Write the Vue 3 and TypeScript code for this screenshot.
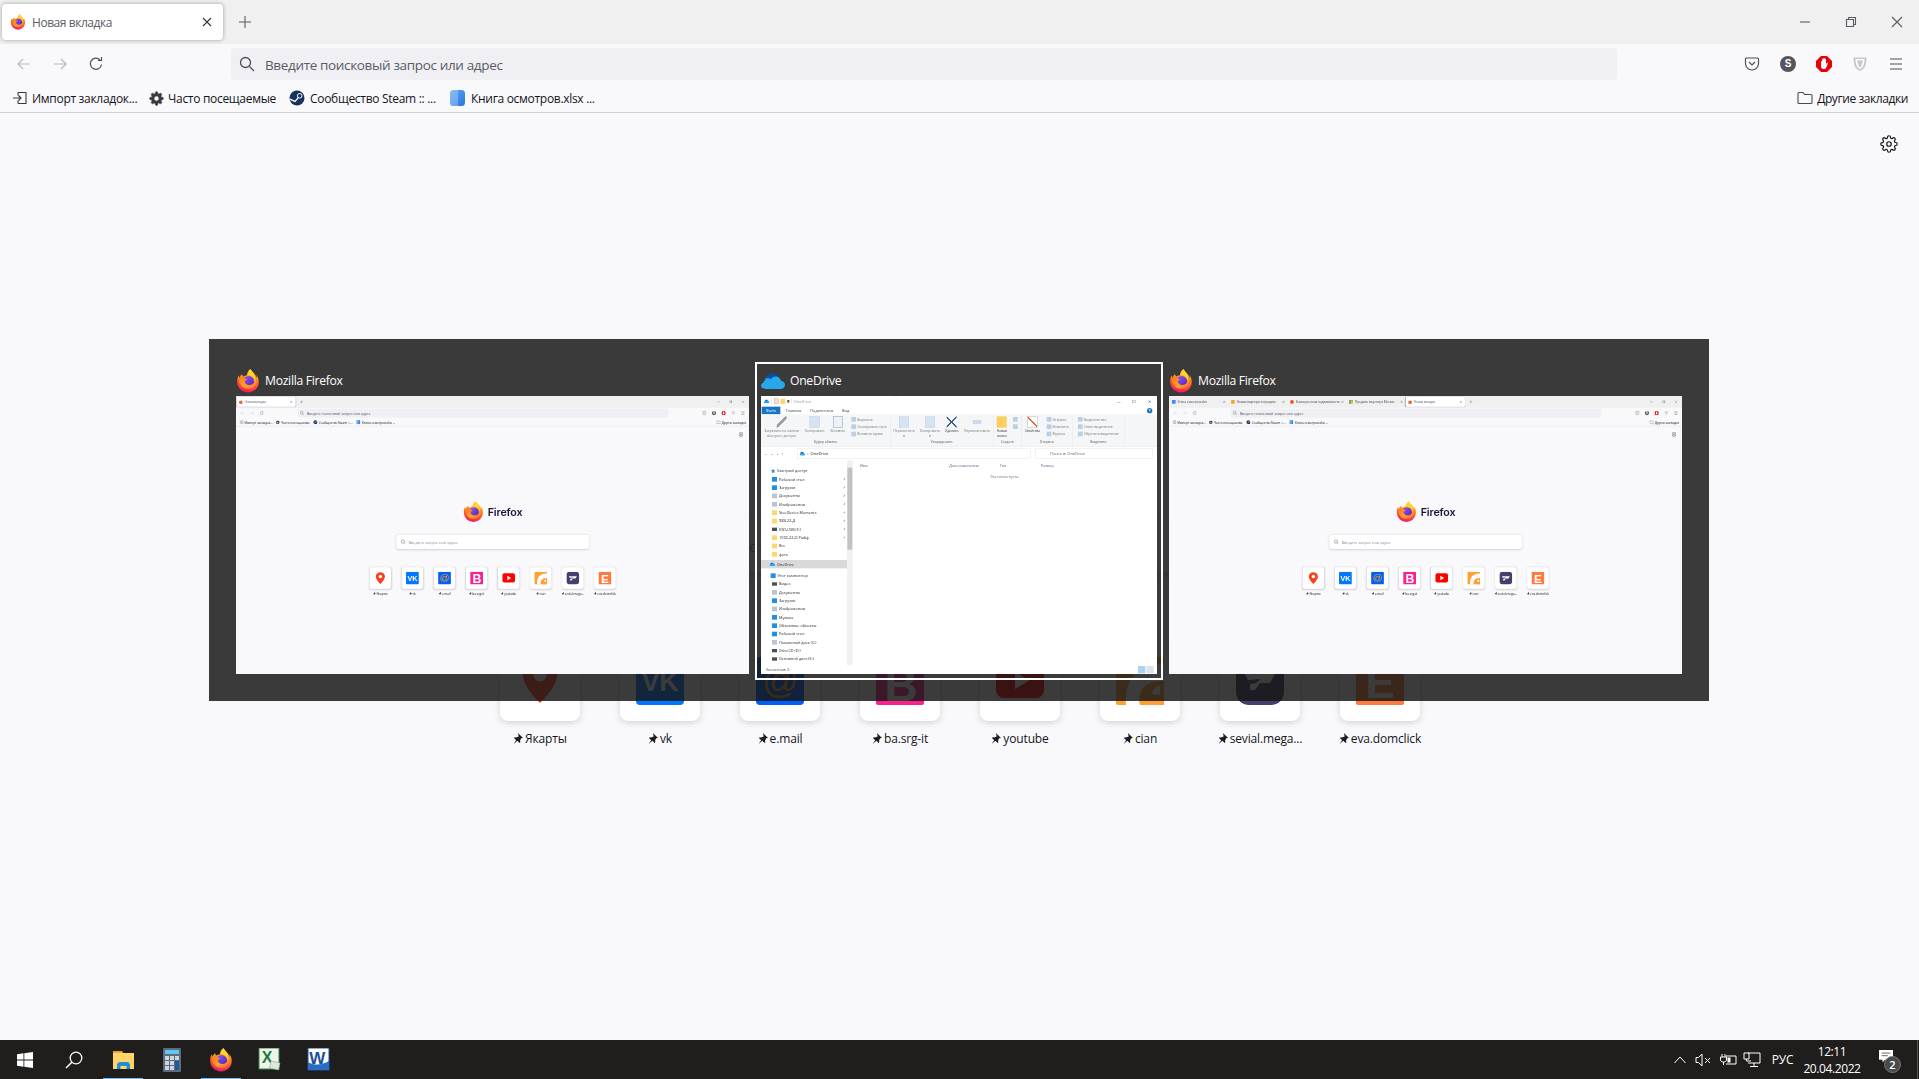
<script setup lang="ts">
interface TabItem {
  title: string
  icon: string
  active?: boolean
}

interface Tile {
  label: string
  icon: string
  glyph?: { text: string; x: number; y: number; size: number; fill: string; bold?: boolean }
}

const props = defineProps<{
  mini?: boolean
  tabs?: TabItem[]
}>()

const firstTabs: TabItem[] = [{ title: 'Новая вкладка', icon: 'ff', active: true }]
// третье окно: пять вкладок, текст на миниатюре всё равно не читается
const manyTabs: TabItem[] = [
  { title: 'Книга осмотров.xlsx', icon: 'doc' },
  { title: 'Новая квартира в продаже', icon: 'orange' },
  { title: 'Коммерческая недвижимость', icon: 'red' },
  { title: 'Продажа квартир в Москве', icon: 'ms' },
  { title: 'Новая вкладка', icon: 'ff', active: true },
]

const bookmarks = [
  { title: 'Импорт закладок...', icon: 'import' },
  { title: 'Часто посещаемые', icon: 'gear' },
  { title: 'Сообщество Steam :: ...', icon: 'steam' },
  { title: 'Книга осмотров.xlsx ...', icon: 'sheet' },
]

const tiles: Tile[] = [
  { label: 'Якарты', icon: 't-pin' },
  { label: 'vk', icon: 't-vk', glyph: { text: 'VK', x: 24, y: 34, size: 27, fill: '#fff', bold: true } },
  { label: 'e.mail', icon: 't-mail', glyph: { text: '@', x: 24, y: 36, size: 36, fill: '#f99d1c' } },
  { label: 'ba.srg-it', icon: 't-ba', glyph: { text: 'B', x: 25, y: 44, size: 46, fill: '#fff', bold: true } },
  { label: 'youtube', icon: 't-yt' },
  { label: 'cian', icon: 't-cian' },
  { label: 'sevial.mega...', icon: 't-sev' },
  { label: 'eva.domclick', icon: 't-eva', glyph: { text: 'E', x: 24, y: 41, size: 44, fill: '#fff', bold: true } },
]

const ribbon = [
  {
    label: 'Буфер обмена',
    bigs: [
      { k: 'pin', lines: ['Закрепить на панели', 'быстрого доступа'] },
      { k: 'doc', lines: ['Копировать'] },
      { k: 'paste', lines: ['Вставить'] },
    ],
    smalls: ['Вырезать', 'Скопировать путь', 'Вставить ярлык'],
  },
  {
    label: 'Упорядочить',
    bigs: [
      { k: 'doc', lines: ['Переместить', 'в'] },
      { k: 'doc', lines: ['Копировать', 'в'] },
      { k: 'del', lines: ['Удалить'] },
      { k: 'ren', lines: ['Переименовать'] },
    ],
    smalls: [],
  },
  { label: 'Создать', bigs: [{ k: 'folder', lines: ['Новая', 'папка'] }], smalls: [' ', '  '] },
  {
    label: 'Открыть',
    bigs: [{ k: 'check', lines: ['Свойства'] }],
    smalls: ['Открыть', 'Изменить', 'Журнал'],
  },
  { label: 'Выделить', bigs: [], smalls: ['Выделить все', 'Снять выделение', 'Обратить выделение'] },
]

const quickRows = [
  { t: 'Рабочий стол', c: 'blue' },
  { t: 'Загрузки', c: 'blue' },
  { t: 'Документы', c: 'grey' },
  { t: 'Изображения', c: 'grey' },
  { t: 'SteelSeries Moments', c: 'yellow' },
  { t: '988-22-Д', c: 'yellow' },
  { t: 'ESD-USB (F:)', c: 'dark' },
  { t: '1592-22-О Рыбф', c: 'yellow' },
  { t: 'Bre', c: 'yellow', nopin: true },
  { t: 'фото', c: 'yellow', nopin: true },
]

const pcRows = [
  { t: 'Видео', c: 'dark' },
  { t: 'Документы', c: 'grey' },
  { t: 'Загрузки', c: 'blue' },
  { t: 'Изображения', c: 'grey' },
  { t: 'Музыка', c: 'blue' },
  { t: 'Объемные объекты', c: 'blue' },
  { t: 'Рабочий стол', c: 'blue' },
  { t: 'Локальный диск (C:)', c: 'grey' },
  { t: 'DriveCD (D:)', c: 'dark' },
  { t: 'Основной диск (E:)', c: 'dark' },
]

const columns = ['Имя', 'Дата изменения', 'Тип', 'Размер']
</script>

<template>
  <div class="desktop" :class="{ mini: props.mini }">
    <!-- общие значки -->
    <svg v-if="!props.mini" class="defs" width="0" height="0">
      <defs>
        <linearGradient id="ff-body" x1=".62" y1="0" x2=".42" y2="1">
          <stop offset="0" stop-color="#ffe226" />
          <stop offset=".32" stop-color="#ff9a1f" />
          <stop offset=".68" stop-color="#ff4f3a" />
          <stop offset="1" stop-color="#f5156c" />
        </linearGradient>
        <linearGradient id="ff-globe" x1="0" y1="0" x2="1" y2="1">
          <stop offset="0" stop-color="#9059ff" />
          <stop offset="1" stop-color="#4f22b8" />
        </linearGradient>
        <linearGradient id="ff-fox" x1="0" y1="0" x2=".8" y2="1">
          <stop offset="0" stop-color="#ff7a1f" />
          <stop offset=".6" stop-color="#ffa51f" />
          <stop offset="1" stop-color="#ff6a2b" />
        </linearGradient>
        <linearGradient id="sheet-blue" x1="0" y1="0" x2="1" y2="1">
          <stop offset="0" stop-color="#5aa9f5" />
          <stop offset="1" stop-color="#2f74d8" />
        </linearGradient>
      </defs>
      <symbol id="ff" viewBox="1.5 .5 21 23">
        <path fill="url(#ff-body)" d="M3 6.500C2.200 8 1.700 10 1.700 12.700a10.300 10.300 0 1 0 20.600 0c0-2.200-.8-4.700-2.300-6.400.5 1.700.4 2.500.3 2.900C19.500 6 17 4 15 1.500c-.2-.3-.4-.6-.5-.9-2.500 1.400-3.500 4.400-3.500 5.900-1.500.1-2.500.5-3.400 1.200-.6-.4-1-.9-1.200-2.100C5 6.400 4 8 3.800 9c-.3-.7-.6-1.600-.8-2.500Z" />
        <circle cx="12.600" cy="12.600" r="5.300" fill="url(#ff-globe)" />
        <path fill="url(#ff-fox)" d="M3.700 9.500c.5-.6 1.600-1 2.700-.9 1.300.1 1.900.9 3.200 1.200 1.100.2 1.600.6 1.500 1-.1.3-1.200.6-2 .8-.5 1.800.8 3.700 3 4.200 2.800.6 5.300-.8 6.200-3 .5-1.200.4-2.500.2-3.500 1 1.200 1.400 2.800 1.300 4.300-.3 3.400-3.400 6.200-7.300 6.200-4.500 0-8.200-3.500-8.700-7.400-.2-1.100-.2-2 0-2.900Z" />
        <path fill="#ffd52b" d="M14.500 1c-1.800 1.500-2.700 3.500-2.800 5.300 1.900-.1 4.700.9 6 3.300 1 1.700.8 3.400.8 3.400 1.200-2.800.4-6.200-2-9C15.600 3 14.900 2 14.500 1Z" />
      </symbol>
      <symbol id="od-logo" viewBox="0 0 24 16">
        <path fill="#0a4f9e" d="M9 11 5 4.500C6.200 1.800 8.700.2 11.500.2c2.300 0 4.400 1.100 5.700 3l-4 4Z" />
        <path fill="#1490df" d="M6 14 4 5.200c2-.9 4-.6 5.700.6l5 3.700Z" />
        <path fill="#28a8ea" d="M5 16h14.500c2.500 0 4.500-1.800 4.500-4 0-2.100-1.700-3.900-4-4-.4-2.600-2.700-4.500-5.300-4.500-2.100 0-4 1.200-4.800 3-.7-.4-1.500-.6-2.400-.6C4.800 5.900 2.800 7.500 2.400 9.700.9 10.200 0 11.500 0 12.800 0 14.600 2 16 5 16Z" />
      </symbol>
      <symbol id="t-pin" viewBox="0 0 48 48">
        <path fill="#fc3f1d" d="M24 2C14 2 7 9 7 18c0 12 17 28 17 28s17-16 17-28C41 9 34 2 24 2Z" />
        <circle cx="24" cy="18" r="6.500" fill="#fff" />
      </symbol>
      <symbol id="t-vk" viewBox="0 0 48 48"><rect width="48" height="48" rx="4" fill="#07f" /></symbol>
      <symbol id="t-mail" viewBox="0 0 48 48"><rect width="48" height="48" rx="4" fill="#005ff9" /></symbol>
      <symbol id="t-ba" viewBox="0 0 48 48"><rect width="48" height="48" rx="2" fill="#f9218d" /></symbol>
      <symbol id="t-yt" viewBox="0 0 48 48">
        <rect y="6" width="48" height="35" rx="8" fill="#f00" />
        <path fill="#fff" d="M19 15v17l14-8.500Z" />
      </symbol>
      <symbol id="t-cian" viewBox="0 0 48 48">
        <rect width="48" height="48" rx="2" fill="#ffa033" />
        <path fill="#fff" d="M48 7C24 5 8 20 10 48h14c-3-13 4-25 24-24Z" />
        <path fill="#ffa033" d="M40 28c-6 0-10 5-10 12 0 3 1 6 2 8h16V28Z" />
        <path fill="#fff" d="M44 29v9l-8-1c1-5 4-8 8-8Z" />
      </symbol>
      <symbol id="t-sev" viewBox="0 0 48 48">
        <rect width="48" height="48" rx="13" fill="#463f6c" />
        <path fill="#fff" d="M9 17h30l-5 9H21l-4 2 8-6-13 1Z" />
        <path fill="#fff" d="m14 27 10-1-5 7h-5Z" />
      </symbol>
      <symbol id="t-eva" viewBox="0 0 48 48"><rect width="48" height="48" rx="2" fill="#ff7a3d" /></symbol>
      <symbol id="cog" viewBox="0 0 24 24">
        <circle cx="12" cy="12" r="3" />
        <path d="M19.400 15a1.650 1.650 0 0 0 .33 1.820l.06.06a2 2 0 1 1-2.830 2.830l-.06-.06a1.650 1.650 0 0 0-1.820-.33 1.650 1.650 0 0 0-1 1.510V21a2 2 0 1 1-4 0v-.09A1.650 1.650 0 0 0 9 19.400a1.650 1.650 0 0 0-1.820.33l-.06.06a2 2 0 1 1-2.830-2.830l.06-.06a1.650 1.650 0 0 0 .33-1.820 1.650 1.650 0 0 0-1.510-1H3a2 2 0 1 1 0-4h.09A1.650 1.650 0 0 0 4.600 9a1.650 1.650 0 0 0-.33-1.820l-.06-.06a2 2 0 1 1 2.830-2.830l.06.06a1.650 1.650 0 0 0 1.820.33H9a1.650 1.650 0 0 0 1-1.510V3a2 2 0 1 1 4 0v.09a1.650 1.650 0 0 0 1 1.510 1.650 1.650 0 0 0 1.820-.33l.06-.06a2 2 0 1 1 2.830 2.830l-.06.06a1.650 1.650 0 0 0-.33 1.820V9a1.650 1.650 0 0 0 1.510 1H21a2 2 0 1 1 0 4h-.09a1.650 1.650 0 0 0-1.510 1Z" />
      </symbol>
    </svg>

    <div class="browser">
      <div class="tabstrip">
        <div
          v-for="tab in (props.tabs ?? firstTabs)"
          :key="tab.title"
          class="tab"
          :class="{ active: tab.active }"
        >
          <svg v-if="tab.icon === 'ff'" class="fav" viewBox="0 0 16 16"><use href="#ff" width="16" height="16" /></svg>
          <svg v-else class="fav" viewBox="0 0 16 16">
            <rect v-if="tab.icon === 'doc'" x="1" y="1" width="14" height="14" rx="2" fill="#3d8bf0" />
            <rect v-if="tab.icon === 'orange'" x="1" y="1" width="14" height="14" rx="3" fill="#f3a33a" />
            <circle v-if="tab.icon === 'red'" cx="8" cy="8" r="7" fill="#e8501f" />
            <g v-if="tab.icon === 'ms'">
              <rect x="1" y="1" width="6.500" height="6.500" fill="#f25022" />
              <rect x="8.500" y="1" width="6.500" height="6.500" fill="#7fba00" />
              <rect x="1" y="8.500" width="6.500" height="6.500" fill="#00a4ef" />
              <rect x="8.500" y="8.500" width="6.500" height="6.500" fill="#ffb900" />
            </g>
          </svg>
          <span class="tab-title">{{ tab.title }}</span>
          <svg class="tab-x" viewBox="0 0 10 10"><path d="M1 1l8 8M9 1L1 9" /></svg>
        </div>
        <svg class="plus" viewBox="0 0 12 12"><path d="M6 0v12M0 6h12" /></svg>
        <div class="winbtns">
          <svg viewBox="0 0 12 12"><path d="M1 6h10" /></svg>
          <svg viewBox="0 0 12 12"><path d="M1.500 3.500h7v7h-7zM3.500 3.500v-2h7v7h-2" /></svg>
          <svg viewBox="0 0 12 12"><path d="M1 1l10 10M11 1L1 11" /></svg>
        </div>
      </div>

      <div class="navbar">
        <button class="navbtn faded">
          <svg viewBox="0 0 16 16"><path d="M14 8H2.500M7 3 2 8l5 5" /></svg>
        </button>
        <button class="navbtn faded">
          <svg viewBox="0 0 16 16"><path d="M2 8h11.500M9 3l5 5-5 5" /></svg>
        </button>
        <button class="navbtn">
          <svg viewBox="0 0 16 16"><path d="M13.500 8.500A5.600 5.600 0 1 1 12 3.800M13.500 1v3.500H10" /></svg>
        </button>
        <div class="urlbar">
          <svg class="lens" viewBox="0 0 16 16"><circle cx="6.500" cy="6.500" r="5" /><path d="m10.500 10.500 4.500 4.500" /></svg>
          <span>Введите поисковый запрос или адрес</span>
        </div>
        <div class="tools">
          <button class="navbtn">
            <svg viewBox="0 0 16 16"><path d="M2.500 2h11c.6 0 1 .4 1 1v4.500a6.500 6.500 0 0 1-13 0V3c0-.6.400-1 1-1Z" /><path d="m5 6 3 3 3-3" /></svg>
          </button>
          <button class="navbtn">
            <span class="s-badge">S</span>
          </button>
          <button class="navbtn">
            <svg viewBox="0 0 16 16" class="solid">
              <path fill="#e8000b" d="M5 0h6l5 5v6l-5 5H5l-5-5V5Z" />
              <path fill="#fff" d="M5 5.500c0-.8 1.200-.8 1.200 0V3.200c0-.8 1.300-.8 1.300 0v-.7c0-.8 1.300-.8 1.300 0v.8c0-.7 1.200-.7 1.200 0V8l.8-1c.6-.6 1.500 0 1 .7L10 12c-.5.700-1 1-2 1H7.500C6 13 5 12 5 10.500Z" />
            </svg>
          </button>
          <button class="navbtn">
            <svg viewBox="0 0 16 16" class="solid">
              <path fill="#c8c8cc" d="M1.500 1.500h13c0 7-1 11-6.500 13.500C2.500 12.500 1.500 8.500 1.500 1.500Z" />
              <path fill="#f9f9fb" d="M3.500 3h9c0 5-1 8-4.500 10.200C4.500 11 3.500 8 3.500 3Z" />
              <path fill="#c8c8cc" d="M5 4.500h6L8.800 11H7.200Z" />
            </svg>
          </button>
          <button class="navbtn">
            <svg viewBox="0 0 16 16"><path d="M2 3h12M2 8h12M2 13h12" /></svg>
          </button>
        </div>
      </div>

      <div class="bookbar">
        <div v-for="b in bookmarks" :key="b.icon" class="book">
          <svg v-if="b.icon === 'import'" class="bico" viewBox="0 0 16 16">
            <path d="M6 2.500h8v11H6M6 2.500v3M6 10.500v3M1 8h8M6.500 5.500 9 8l-2.500 2.500" fill="none" stroke="#3a3a42" stroke-width="1.100" />
          </svg>
          <svg v-if="b.icon === 'gear'" class="bico gearfill" viewBox="0 0 24 24">
            <use href="#cog" width="24" height="24" />
            <circle cx="12" cy="12" r="3.500" fill="#f9f9fb" stroke="none" />
          </svg>
          <svg v-if="b.icon === 'steam'" class="bico" viewBox="0 0 16 16">
            <circle cx="8" cy="8" r="7.500" fill="#12345e" />
            <circle cx="10.700" cy="5.800" r="2.300" fill="none" stroke="#fff" stroke-width="1" />
            <path d="M.8 9.200 6 11.400l3.500-4" fill="none" stroke="#fff" stroke-width="1.300" />
          </svg>
          <svg v-if="b.icon === 'sheet'" class="bico" viewBox="0 0 16 16">
            <rect x="1" y="0" width="15" height="16" rx="3.500" fill="url(#sheet-blue)" />
            <path fill="#fff" opacity=".25" d="M1 3.500C1 1.500 2.500 0 4.500 0H9v16H4.500C2.500 16 1 14.500 1 12.500Z" />
          </svg>
          <span>{{ b.title }}</span>
        </div>
        <div class="book other">
          <svg class="bico" viewBox="0 0 16 16"><path d="M1 3.500c0-.6.400-1 1-1h4l1.500 2H14c.6 0 1 .4 1 1v7c0 .6-.4 1-1 1H2c-.6 0-1-.4-1-1Z" fill="none" stroke="#4a4a55" stroke-width="1.100" /></svg>
          <span>Другие закладки</span>
        </div>
      </div>

      <div class="newtab">
        <svg class="settings" viewBox="0 0 24 24"><use href="#cog" width="24" height="24" /></svg>
        <div class="brand">
          <svg class="brand-logo" viewBox="0 0 80 80"><use href="#ff" width="80" height="80" /></svg>
          <span>Firefox</span>
        </div>
        <div class="searchbox">
          <svg class="lens big" viewBox="0 0 16 16"><circle cx="6.500" cy="6.500" r="5" /><path d="m10.500 10.500 4.500 4.500" /></svg>
          <span>Введите запрос или адрес</span>
        </div>
        <div class="tiles">
          <div v-for="t in tiles" :key="t.label" class="site">
            <div class="tile">
              <svg viewBox="0 0 48 48">
                <use :href="'#' + t.icon" width="48" height="48" />
                <text
                  v-if="t.glyph"
                  :x="t.glyph.x"
                  :y="t.glyph.y"
                  :font-size="t.glyph.size"
                  :fill="t.glyph.fill"
                  :font-weight="t.glyph.bold ? 700 : 400"
                  text-anchor="middle"
                  font-family="Liberation Sans"
                >{{ t.glyph.text }}</text>
              </svg>
            </div>
            <div class="site-label">
              <svg viewBox="0 0 10 10"><path fill="#1c1b22" d="M5.400 0 10 4.500l-1.700.3-1 2.300.3 1.400-.7.600-2-2L1.500 10 3.800 6.500l-2-2 .7-.6 1.200.3 2.400-1Z" /></svg>
              <span>{{ t.label }}</span>
            </div>
          </div>
        </div>
      </div>
    </div>

    <template v-if="!props.mini">
      <div class="taskbar">
        <div class="task">
          <svg viewBox="0 0 16 16" class="ti16"><path fill="#fff" d="M0 2.300 6.500 1.300v6.300H0ZM7.300 1.200 16 0v7.600H7.300ZM0 8.400h6.500v6.300L0 13.700ZM7.300 8.400H16V16l-8.700-1.200Z" /></svg>
        </div>
        <div class="task">
          <svg viewBox="0 0 18 18" class="ti18"><circle cx="11" cy="7" r="5.800" fill="none" stroke="#fff" stroke-width="1.300" /><path d="M6.800 11.200 1 17" stroke="#fff" stroke-width="1.500" /></svg>
        </div>
        <div class="task on">
          <svg viewBox="0 0 24 24" class="ti24">
            <path fill="#e8a92e" d="M2 3h9l2 3H2Z" />
            <rect x="2" y="5" width="21" height="16" fill="#ffd568" />
            <path fill="#1f8fdc" d="M6 21v-5l2-2h9l2 2v5h-3.500v-3h-6v3Z" />
          </svg>
        </div>
        <div class="task">
          <svg viewBox="0 0 24 24" class="ti24">
            <rect x="3" y="0" width="18" height="24" rx="1" fill="#5e6b7c" />
            <rect x="5" y="2" width="14" height="4" fill="#5ec8f2" />
            <g fill="#cdd5dd">
              <rect x="5" y="8" width="4" height="4" /><rect x="10" y="8" width="4" height="4" /><rect x="15" y="8" width="4" height="4" />
              <rect x="5" y="13" width="4" height="4" /><rect x="10" y="13" width="4" height="4" />
              <rect x="5" y="18" width="4" height="4" /><rect x="10" y="18" width="4" height="4" />
            </g>
            <rect x="15" y="13" width="4" height="9" fill="#1a5a9e" />
          </svg>
        </div>
        <div class="task on2">
          <svg viewBox="0 0 24 24" class="ti24"><use href="#ff" width="24" height="24" /></svg>
        </div>
        <div class="task">
          <svg viewBox="0 0 24 24" class="ti24">
            <rect x="1" y="0" width="20" height="21" fill="#eef4ec" stroke="#2f8a4a" />
            <text x="9" y="15" text-anchor="middle" font-family="Liberation Sans" font-weight="700" font-size="16" fill="#1d7a3e">X</text>
            <path fill="#dfe8dc" stroke="#8aa88c" stroke-width=".6" d="M13 13l9 2-1.500 7-9-2Z" />
          </svg>
        </div>
        <div class="task">
          <svg viewBox="0 0 24 24" class="ti24">
            <rect x="1" y="0" width="21" height="22" fill="#fff" stroke="#1d4f9c" />
            <path fill="#2b6cc4" d="M1 14c7 4 14 3 21-1v9H1Z" />
            <text x="10" y="16" text-anchor="middle" font-family="Liberation Sans" font-weight="700" font-size="17" fill="#1d4f9c">W</text>
          </svg>
        </div>

        <div class="tray">
          <svg class="tray-caret" viewBox="0 0 12 8"><path d="M.5 7 6 1l5.500 6" /></svg>
          <svg class="tray-ico" viewBox="0 0 16 16"><path d="M1 5.500h2.500L7 2v12L3.500 10.500H1ZM10 6l5 5M15 6l-5 5" /></svg>
          <svg class="tray-ico wide" viewBox="0 0 18 16"><path d="M7 4h10v8H7M3 2v3M6 2v3M1.500 5h6v3c0 1-1 2-3 2s-3-1-3-2ZM4.500 10v3" /><rect x="8.500" y="5.500" width="3" height="5" fill="#fff" stroke="none" /></svg>
          <svg class="tray-ico wide" viewBox="0 0 18 16"><path d="M5 1h12v10H5M1 1h5v6H1ZM3.500 7v2H8M11 11v3M7 14.500h8" /></svg>
          <span class="lang">РУС</span>
          <div class="clock">
            <span>12:11</span>
            <span>20.04.2022</span>
          </div>
          <div class="notif">
            <svg viewBox="0 0 16 16"><path fill="#fff" d="M0 0h16v11H7l-3 3v-3H0Z" /><path stroke="#555" d="M3 3.500h10M3 6.500h7" /></svg>
            <span class="notif-num">2</span>
          </div>
        </div>
      </div>

      <div class="switcher">
        <div class="win">
          <div class="win-title">
            <svg viewBox="0 0 24 24"><use href="#ff" width="24" height="24" /></svg>
            <span>Mozilla Firefox</span>
          </div>
          <div class="thumb">
            <div class="thumb-scale"><App mini :tabs="firstTabs" /></div>
          </div>
        </div>

        <div class="win selected">
          <div class="win-title">
            <svg viewBox="0 0 24 16"><use href="#od-logo" width="24" height="16" /></svg>
            <span>OneDrive</span>
          </div>
          <div class="thumb thumb-ex">
            <div class="explorer">
              <div class="ex-title">
                <svg viewBox="0 0 24 16"><use href="#od-logo" width="24" height="16" /></svg>
                <i class="ex-sep"></i><i class="qa red"></i><i class="qa yel"></i><i class="qa dot"></i><i class="ex-sep"></i>
                <span>OneDrive</span>
                <div class="ex-winbtns">
                  <span>—</span><span>☐</span><span>✕</span>
                </div>
              </div>
              <div class="ex-tabs">
                <span class="ex-file">Файл</span>
                <span>Главная</span>
                <span>Поделиться</span>
                <span>Вид</span>
                <b class="ex-help">?</b>
              </div>
              <div class="ex-ribbon">
                <div v-for="g in ribbon" :key="g.label" class="rb-group">
                  <div class="rb-items">
                    <div v-for="b in g.bigs" :key="b.lines[0] + g.label" class="rb-big">
                      <i class="rb-ico" :class="b.k"></i>
                      <span v-for="l in b.lines" :key="l">{{ l }}</span>
                    </div>
                    <div v-if="g.smalls.length" class="rb-smalls">
                      <div v-for="s in g.smalls" :key="s" class="rb-small"><i></i>{{ s }}</div>
                    </div>
                  </div>
                  <div class="rb-label">{{ g.label }}</div>
                </div>
              </div>
              <div class="ex-addr">
                <span class="ex-arrows">←&nbsp;&nbsp;→&nbsp;&nbsp;⌄&nbsp;&nbsp;↑</span>
                <div class="ex-path">
                  <svg viewBox="0 0 24 16"><use href="#od-logo" width="24" height="16" /></svg>
                  <span>›&nbsp;&nbsp;OneDrive</span>
                </div>
                <div class="ex-find">Поиск в: OneDrive</div>
              </div>
              <div class="ex-body">
                <div class="ex-side">
                  <div class="row head"><i class="ic star"></i>Быстрый доступ</div>
                  <div v-for="r in quickRows" :key="r.t" class="row">
                    <i class="ic" :class="r.c"></i>{{ r.t }}
                    <em v-if="!r.nopin" class="pinmark"></em>
                  </div>
                  <div class="row head sel"><svg viewBox="0 0 24 16"><use href="#od-logo" width="24" height="16" /></svg>OneDrive</div>
                  <div class="row head pc"><i class="ic blue"></i>Этот компьютер</div>
                  <div v-for="r in pcRows" :key="r.t" class="row">
                    <i class="ic" :class="r.c"></i>{{ r.t }}
                  </div>
                </div>
                <div class="ex-scroll"><i></i></div>
                <div class="ex-main">
                  <div class="ex-cols">
                    <span v-for="c in columns" :key="c">{{ c }}</span>
                  </div>
                  <div class="ex-empty">Эта папка пуста.</div>
                </div>
              </div>
              <div class="ex-status">
                <span>Элементов: 0</span>
                <i class="vw on"></i><i class="vw"></i>
              </div>
            </div>
          </div>
        </div>

        <div class="win">
          <div class="win-title">
            <svg viewBox="0 0 24 24"><use href="#ff" width="24" height="24" /></svg>
            <span>Mozilla Firefox</span>
          </div>
          <div class="thumb">
            <div class="thumb-scale"><App mini :tabs="manyTabs" /></div>
          </div>
        </div>
      </div>
    </template>
  </div>
</template>

<style scoped>
.desktop {
  position: relative;
  width: 1919px;
  height: 1079px;
  overflow: hidden;
  display: flex;
  flex-direction: column;
  background: #f9f9fb;
  color: #15141a;
  font-family: "Open Sans", "Noto Sans", sans-serif;
  font-size: 12px;
  letter-spacing: -0.3px;
}
.desktop.mini { height: 1040px; }
.defs { position: absolute; }

.browser { height: 1040px; flex: none; display: flex; flex-direction: column; }
.navbtn svg, .winbtns svg, .plus, .tab-x, .lens, .settings, .tray svg {
  fill: none;
  stroke: #5b5b66;
  stroke-width: 1.1;
}

.tabstrip {
  height: 44px;
  flex: none;
  background: #f0f0f0;
  display: flex;
  align-items: flex-start;
  padding-left: 2px;
}
.tab {
  width: 221px;
  height: 36px;
  margin-top: 4px;
  display: flex;
  align-items: center;
  padding: 0 11px 0 8px;
  box-sizing: border-box;
  border-radius: 4px;
  color: #4a4a55;
  flex: none;
  letter-spacing: -0.45px;
}
.tab.active { background: #fff; box-shadow: 0 0 4px rgba(0,0,0,.35); color: #5b5b66; }
.tab-title { flex: 1; margin-left: 6px; white-space: nowrap; overflow: hidden; }
.fav { width: 16px; height: 16px; flex: none; }
.tab-x { width: 10px; height: 10px; stroke: #333; }
.plus { width: 12px; height: 12px; margin: 16px 0 0 16px; flex: none; }
.winbtns { margin-left: auto; margin-right: -1px; display: flex; height: 44px; }
.winbtns svg { width: 12px; height: 12px; padding: 16px 17px; }

.navbar { height: 40px; flex: none; display: flex; align-items: center; padding: 0 5px 0 6px; }
.navbtn {
  width: 36px;
  height: 36px;
  border: 0;
  padding: 0;
  background: none;
  display: flex;
  align-items: center;
  justify-content: center;
  flex: none;
}
.navbtn svg { width: 16px; height: 16px; stroke: #4f4f59; stroke-width: 1.200; }
.navbtn svg.solid { stroke: none; }
.navbtn.faded svg { stroke: #b9b9bf; }
.urlbar {
  width: 1386px;
  height: 32px;
  margin-left: 117px;
  background: #f0f0f4;
  border-radius: 4px;
  display: flex;
  align-items: center;
  padding-left: 8px;
  box-sizing: border-box;
  font-size: 13.500px;
  letter-spacing: -0.35px;
  color: #5b5b66;
}
.urlbar span { padding-top: 2px; }
.lens { width: 16px; height: 16px; margin-right: 10px; stroke: #4f4f59; stroke-width: 1.300; flex: none; }
.tools { margin-left: auto; display: flex; }
.s-badge {
  width: 16px;
  height: 16px;
  border-radius: 50%;
  background: #55555f;
  color: #fff;
  font-size: 10px;
  font-weight: 700;
  text-align: center;
  line-height: 16px;
  letter-spacing: 0;
}

.bookbar {
  height: 28px;
  flex: none;
  display: grid;
  grid-template-columns: 136px 141px 160px auto 1fr;
  align-items: center;
  padding-left: 12px;
  border-bottom: 1px solid #cfcfd3;
  color: #15141a;
}
.book { display: flex; align-items: center; gap: 4px; white-space: nowrap; }
.book:nth-child(3) { gap: 5px; }
.book:nth-child(4) { gap: 6px; }
.bico { width: 16px; height: 16px; flex: none; }
.gearfill { fill: #3a3a42; stroke: #3a3a42; stroke-width: 1; width: 15px; height: 15px; margin-left: 1px; }
.other { justify-self: end; padding-right: 11px; letter-spacing: -0.42px; }

.newtab { flex: 1; position: relative; display: flex; flex-direction: column; align-items: center; }
.settings { position: absolute; top: 22px; right: 21px; width: 18px; height: 18px; stroke: #15141a; stroke-width: 1.600; }
.brand { display: flex; align-items: center; gap: 14px; margin-top: 280px; height: 80px; }
.brand-logo { width: 80px; height: 80px; }
.brand span { font-family: Inter, sans-serif; font-weight: 600; font-size: 40px; letter-spacing: -0.5px; color: #20123a; }
.searchbox {
  width: 720px;
  height: 52px;
  margin-top: 47px;
  background: #fff;
  border-radius: 8px;
  box-shadow: 0 3px 8px rgba(58,57,68,.2);
  display: flex;
  align-items: center;
  padding-left: 16px;
  box-sizing: border-box;
  font-size: 15px;
  color: #8f8f9d;
}
.lens.big { width: 20px; height: 20px; }
.tiles { display: flex; margin-top: 69px; }
.site { width: 120px; display: flex; flex-direction: column; align-items: center; }
.tile {
  width: 80px;
  height: 80px;
  background: #fff;
  border-radius: 8px;
  box-shadow: 0 2px 6px rgba(58,57,68,.2);
  display: flex;
  align-items: center;
  justify-content: center;
}
.tile svg { width: 48px; height: 48px; }
.site-label { display: flex; align-items: center; gap: 2px; margin-top: 9px; height: 17px; white-space: nowrap; letter-spacing: -0.15px; }
.site-label svg { width: 11px; height: 11px; flex: none; }

.taskbar {
  height: 39px;
  flex: none;
  background: #1f1e1c;
  display: flex;
  align-items: stretch;
  color: #fff;
}
.task {
  width: 49px;
  display: flex;
  align-items: center;
  justify-content: center;
  position: relative;
  flex: none;
}
.task.on::after, .task.on2::after {
  content: "";
  position: absolute;
  left: 5px;
  right: 4px;
  bottom: 0;
  height: 1px;
  background: #76b9ed;
}
.ti16 { width: 16px; height: 16px; }
.ti18 { width: 18px; height: 18px; }
.ti24 { width: 24px; height: 24px; }
.tray { margin-left: auto; margin-right: 1px; display: flex; align-items: center; padding-right: 17px; border-right: 1px solid #55544f; }
.tray svg { stroke: #fff; stroke-width: 1; flex: none; }
.tray-caret { width: 12px; height: 8px; margin-right: 9px; }
.tray-ico { width: 16px; height: 16px; margin-right: 8px; }
.tray-ico.wide { width: 18px; height: 16px; margin-right: 6px; }
.lang { margin: 0 6px 0 2px; width: 27px; text-align: center; letter-spacing: -0.2px; }
.clock { display: flex; flex-direction: column; align-items: center; line-height: 17px; margin-right: 8px; letter-spacing: -0.4px; width: 60px; }
.notif { position: relative; width: 30px; height: 30px; }
.notif svg { width: 16px; height: 14px; position: absolute; left: 8px; top: 5px; stroke: none; }
.notif svg path + path { stroke: #555; }
.notif-num {
  position: absolute;
  left: 14px;
  top: 11px;
  width: 17px;
  height: 17px;
  border-radius: 50%;
  background: #4a4a4a;
  border: 1px solid #777;
  box-sizing: border-box;
  text-align: center;
  font-size: 11px;
  line-height: 15px;
  font-weight: 600;
  letter-spacing: 0;
}

.switcher {
  position: absolute;
  left: 209px;
  top: 339px;
  width: 1500px;
  height: 362px;
  box-sizing: border-box;
  padding: 23px 21px 21px;
  display: flex;
  background: rgba(22,22,22,.84);
  color: #fff;
}
.win { padding: 6px; position: relative; }
.win.selected { box-shadow: inset 0 0 0 2px #fff; }
.win-title { height: 28px; display: flex; align-items: center; gap: 5px; padding-bottom: 3px; box-sizing: border-box; font-size: 12.200px; }
.win-title svg { width: 24px; height: 24px; flex: none; }
.thumb { width: 513px; height: 278px; overflow: hidden; background: #f9f9fb; }
.thumb-scale { width: 1919px; height: 1040px; transform: scale(.26733); transform-origin: 0 0; filter: blur(.9px); }
.thumb-ex { width: 396px; background: #fff; }

.explorer {
  width: 1188px;
  height: 834px;
  transform: scale(.33333);
  transform-origin: 0 0;
  filter: blur(.8px);
  background: #fff;
  color: #1f1f1f;
  font-size: 12px;
  letter-spacing: 0;
  display: flex;
  flex-direction: column;
}
.explorer i { display: block; flex: none; }
.ex-title { height: 32px; display: flex; align-items: center; padding-left: 8px; gap: 6px; color: #999; flex: none; }
.ex-title svg { width: 18px; height: 12px; }
.ex-sep { width: 1px; height: 14px; background: #bbb; }
.qa { width: 14px; height: 16px; }
.qa.red { background: #f3e2da; border: 1px solid #d88; box-sizing: border-box; }
.qa.yel { background: #ffd66b; }
.qa.dot { width: 6px; height: 8px; background: #555; }
.ex-winbtns { margin-left: auto; display: flex; color: #444; }
.ex-winbtns span { width: 46px; text-align: center; }
.ex-tabs { height: 23px; display: flex; align-items: center; gap: 26px; padding-right: 14px; flex: none; color: #444; }
.ex-file { width: 56px; height: 23px; margin-left: 2px; background: #1874c4; color: #fff; text-align: center; line-height: 23px; margin-right: -10px; }
.ex-help { margin-left: auto; width: 16px; height: 16px; border-radius: 50%; background: #1874c4; color: #fff; text-align: center; line-height: 16px; }
.ex-ribbon {
  height: 97px;
  flex: none;
  box-sizing: border-box;
  display: grid;
  grid-template-columns: 388px 309px 84px 154px 155px 1fr;
  background: #f5f6f7;
  border-bottom: 1px solid #dadbdc;
  color: #777;
  font-size: 10px;
}
.rb-group { border-right: 1px solid #dfe0e1; display: flex; flex-direction: column; min-width: 0; }
.rb-items { flex: 1; display: flex; gap: 2px; padding: 6px 2px 0; justify-content: space-around; }
.rb-big { display: flex; flex-direction: column; align-items: center; line-height: 13px; white-space: nowrap; }
.rb-ico { width: 30px; height: 34px; margin-bottom: 4px; }
.rb-ico.pin { background: linear-gradient(135deg, transparent 40%, #9aa3ad 40%, #9aa3ad 60%, transparent 60%); }
.rb-ico.doc { background: #d6e4f2; border: 1px solid #b5c9de; box-sizing: border-box; }
.rb-ico.paste { background: #eef2f6; border: 2px solid #9fb0c2; box-sizing: border-box; }
.rb-ico.del { background: linear-gradient(45deg, transparent 46%, #3f5f86 46%, #3f5f86 54%, transparent 54%), linear-gradient(-45deg, transparent 46%, #3f5f86 46%, #3f5f86 54%, transparent 54%); }
.rb-ico.ren { background: linear-gradient(#c8dcef, #c8dcef) center / 26px 12px no-repeat; }
.rb-ico.folder { background: #fbcf5e; }
.rb-ico.check { background: linear-gradient(45deg, transparent 44%, #e8632c 44%, #e8632c 56%, transparent 56%), #fff; border: 1px solid #8a9aa9; box-sizing: border-box; }
.rb-group:nth-child(n+3) .rb-big { color: #333; }
.rb-group:nth-child(2) .rb-big:nth-child(3) { color: #333; }
.rb-smalls { display: flex; flex-direction: column; gap: 8px; padding-top: 2px; }
.rb-small { display: flex; align-items: center; gap: 4px; white-space: nowrap; height: 14px; }
.rb-small i { width: 14px; height: 14px; background: #b8cfe6; }
.rb-label { height: 20px; text-align: center; color: #555; }
.ex-addr { height: 41px; flex: none; display: flex; align-items: center; padding-left: 8px; color: #666; }
.ex-arrows { width: 102px; white-space: nowrap; }
.ex-path {
  width: 698px;
  height: 30px;
  box-sizing: border-box;
  border: 1px solid #d9d9d9;
  display: flex;
  align-items: center;
  gap: 6px;
  padding-left: 4px;
  color: #222;
}
.ex-path svg { width: 18px; height: 12px; }
.ex-find { width: 353px; height: 30px; margin-left: 14px; box-sizing: border-box; border: 1px solid #d9d9d9; line-height: 28px; padding-left: 44px; color: #666; }
.ex-body { flex: 1; display: flex; min-height: 0; }
.ex-side { width: 258px; overflow: hidden; padding-top: 19px; box-sizing: border-box; flex: none; }
.row { height: 25px; display: flex; align-items: center; padding-left: 33px; gap: 6px; position: relative; white-space: nowrap; font-size: 11.500px; }
.row.head { padding-left: 29px; gap: 5px; }
.row.sel { background: #d9d9d9; margin-top: 5px; margin-bottom: 9px; padding-left: 25px; }
.row svg { width: 18px; height: 12px; }
.ic { width: 15px; height: 14px; }
.ic.blue { background: #1e90e6; }
.ic.grey { background: #b9c5d0; }
.ic.yellow { background: #ffd66b; }
.ic.dark { background: #4a4f55; height: 10px; }
.ic.star { background: #2f86d9; clip-path: polygon(50% 0, 62% 35%, 100% 38%, 70% 60%, 80% 100%, 50% 78%, 20% 100%, 30% 60%, 0 38%, 38% 35%); }
.pinmark { position: absolute; left: 246px; width: 8px; height: 8px; background: #a9a9a9; clip-path: polygon(60% 0, 100% 40%, 70% 60%, 0 100%, 40% 30%); }
.ex-scroll { width: 17px; background: #f1f1f1; flex: none; padding-top: 22px; box-sizing: border-box; }
.ex-scroll i { height: 246px; background: #c2c2c2; margin: 0 1px; }
.ex-main { flex: 1; }
.ex-cols {
  display: grid;
  grid-template-columns: 268px 151px 123px 80px;
  height: 25px;
  margin-top: 3px;
  align-items: center;
  padding-left: 22px;
  color: #4c607a;
  font-size: 11px;
}
.ex-empty { text-align: center; margin-top: 12px; color: #6d6d6d; font-size: 11px; }
.ex-status { height: 26px; flex: none; display: flex; align-items: center; gap: 3px; padding: 0 10px 0 14px; color: #444; font-size: 11px; }
.ex-status span { margin-right: auto; }
.vw { width: 22px; height: 22px; background: #dfe3e8; }
.vw.on { background: #a9d3f3; }
</style>

<style>
html, body { margin: 0; background: #f9f9fb; }
</style>
